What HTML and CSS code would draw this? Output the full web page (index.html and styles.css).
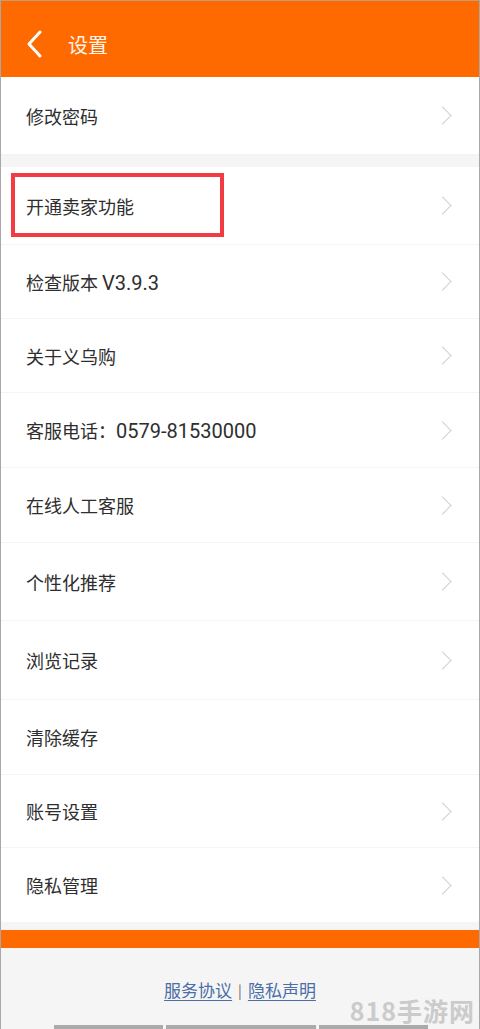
FILE: index.html
```html
<!DOCTYPE html>
<html lang="zh-CN">
<head>
    <meta charset="utf-8">
    <title>设置</title>
    <meta name="viewport" content="width=device-width, user-scalable=no">
    <link rel="stylesheet" href="styles.css">
</head>
<body>
<div class="frame">
    <div class="topbar">
        <svg class="back" width="16" height="28" viewBox="0 0 16 28">
            <path d="M14 2 L3 14 L14 26" fill="none" stroke="#fff" stroke-width="3" stroke-linecap="round" stroke-linejoin="round"/>
        </svg>
        <span class="title">设置</span>
    </div>

    <div class="group">
        <div class="row h78"><span>修改密码</span><i class="arrow"></i></div>
    </div>

    <div class="group">
        <div class="row h78">
            <span>开通卖家功能</span><i class="arrow"></i>
            <div class="mark"></div>
        </div>
        <div class="row h74"><span>检查版本 <b class="num">V3.9.3</b></span><i class="arrow"></i></div>
        <div class="row h74"><span>关于义乌购</span><i class="arrow"></i></div>
        <div class="row h75"><span>客服电话：<b class="num">0579-81530000</b></span><i class="arrow"></i></div>
        <div class="row h75"><span>在线人工客服</span><i class="arrow"></i></div>
        <div class="row h78"><span>个性化推荐</span><i class="arrow"></i></div>
        <div class="row h79"><span>浏览记录</span><i class="arrow"></i></div>
        <div class="row h75"><span>清除缓存</span></div>
        <div class="row h73"><span>账号设置</span><i class="arrow"></i></div>
        <div class="row h74 last"><span>隐私管理</span><i class="arrow"></i></div>
    </div>

    <div class="orange-bar"></div>

    <div class="footer">
        <div class="links">
            <a href="#">服务协议</a>
            <span class="sep">|</span>
            <a href="#">隐私声明</a>
        </div>
        <div class="watermark">818手游网</div>
        <div class="navbars">
            <span class="nb1"></span><span class="nb2"></span><span class="nb3"></span>
        </div>
    </div>
</div>
</body>
</html>
```

FILE: styles.css
```css
body {
    margin: 0;
    background: #ffffff;
    font-family: "Noto Sans CJK SC", "Noto Sans", sans-serif;
    overflow: hidden;
}

.frame {
    position: relative;
    width: 480px;
    height: 1029px;
    box-sizing: border-box;
    border-left: 1px solid #a8a8a8;
    border-right: 1px solid #a8a8a8;
    border-top: 1px solid #c79a78;
    background: #f5f5f5;
    overflow: hidden;
}

.topbar {
    height: 76px;
    box-sizing: border-box;
    padding-top: 10px;
    background: #ff6a00;
    display: flex;
    align-items: center;
    padding-left: 25px;
}

.title {
    margin-left: 26px;
    color: #fff4e8;
    font-size: 20px;
}

.group {
    background: #ffffff;
    margin-bottom: 12px;
}

.row {
    position: relative;
    box-sizing: border-box;
    display: flex;
    align-items: center;
    justify-content: space-between;
    padding: 0 26px 0 25px;
    border-bottom: 1px solid #f4f4f4;
    font-size: 18px;
    color: #2e2e2e;
}

.row.last {
    border-bottom: none;
}

.num {
    font-family: Roboto, "Noto Sans", sans-serif;
    font-weight: normal;
    font-size: 20px;
}

.h73 { height: 73px; }
.h74 { height: 74px; }
.h75 { height: 75px; }
.h78 { height: 78px; }
.h79 { height: 79px; }

.arrow {
    width: 12px;
    height: 12px;
    border-top: 1.5px solid #cfcfcf;
    border-right: 1.5px solid #cfcfcf;
    transform: rotate(45deg);
    margin-right: 4px;
}

.mark {
    position: absolute;
    left: 10px;
    top: 6px;
    width: 213px;
    height: 64px;
    box-sizing: border-box;
    border: 4px solid #f23b43;
}

.group:last-of-type {
    margin-bottom: 8px;
}

.orange-bar {
    margin-top: -4px;
    height: 18px;
    background: #ff6a00;
}

.footer {
    height: 81px;
    display: flex;
    justify-content: center;
    padding-top: 29px;
    box-sizing: border-box;
}

.links {
    font-size: 17px;
    color: #4b6ea5;
    display: flex;
    gap: 6px;
    height: 26px;
}

.links a {
    color: #4b6ea5;
    text-decoration: underline;
    text-underline-offset: 3px;
}

.sep {
    color: #666;
    font-size: 14px;
    line-height: 26px;
}

.watermark {
    position: absolute;
    right: 4px;
    bottom: 1px;
    font-size: 25px;
    font-weight: bold;
    color: #cbcbcb;
    letter-spacing: 1px;
}

.navbars span {
    position: absolute;
    bottom: 0;
    height: 4px;
    background: #aaaaaa;
}

.nb1 { left: 53px; width: 109px; }
.nb2 { left: 165px; width: 150px; }
.nb3 { left: 318px; width: 109px; }
```
